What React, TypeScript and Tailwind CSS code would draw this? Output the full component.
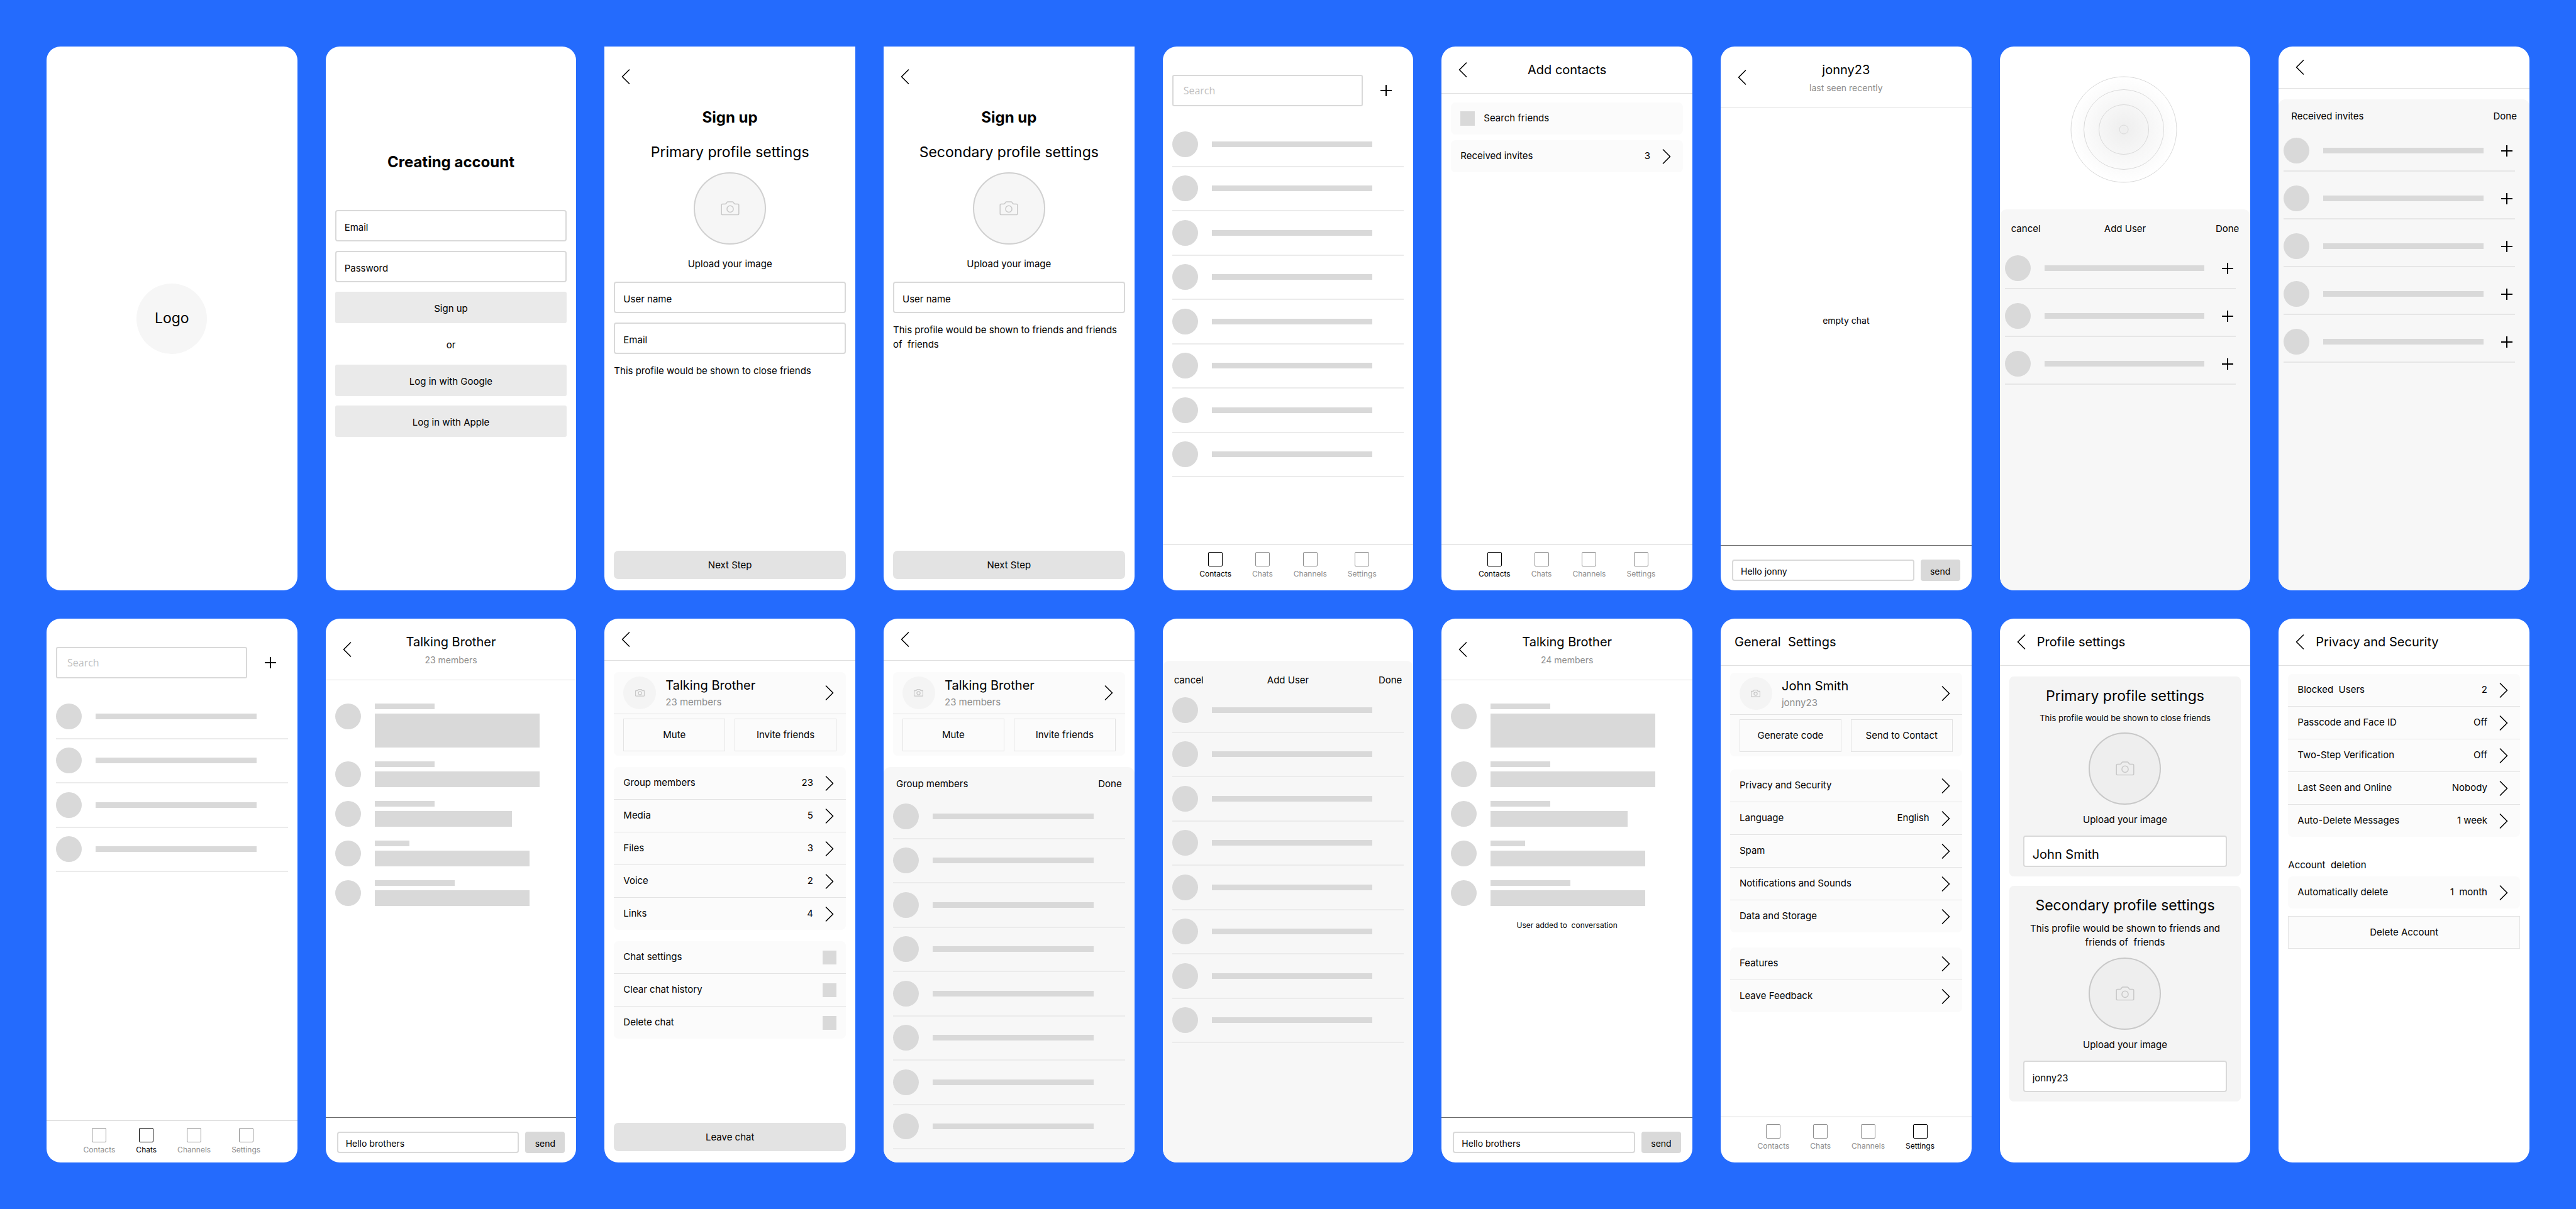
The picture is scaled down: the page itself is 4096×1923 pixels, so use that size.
import type { ReactNode } from 'react';

/* ---------- icons ---------- */

function ChevronLeft() {
  return (
    <svg className="block h-[24px] w-[14px]" viewBox="0 0 14 24" fill="none" stroke="currentColor" strokeWidth="1.6" aria-hidden="true">
      <path d="M12.5 1 1.5 12l11 11" strokeLinecap="round" strokeLinejoin="round" />
    </svg>
  );
}

function ChevronRight() {
  return (
    <svg className="block h-[24px] w-[14px] shrink-0" viewBox="0 0 14 24" fill="none" stroke="currentColor" strokeWidth="1.6" aria-hidden="true">
      <path d="m1.5 1 11 11-11 11" strokeLinecap="round" strokeLinejoin="round" />
    </svg>
  );
}

function Plus() {
  return (
    <svg className="block size-[18px]" viewBox="0 0 18 18" fill="none" stroke="currentColor" strokeWidth="2" aria-hidden="true">
      <path d="M9 0v18M0 9h18" />
    </svg>
  );
}

function Camera({ className, strokeWidth }: { className: string; strokeWidth: number }) {
  return (
    <svg className={className} viewBox="0 0 32 25" fill="none" stroke="#c8c8c8" strokeWidth={strokeWidth} aria-hidden="true">
      <path d="M3 5h4.2c.9 0 1.5-.4 2-1.2l1-1.6C10.700 1.4 11.300 1 12.200 1h7.600c.9 0 1.500.4 2 1.200l1 1.600c.5.8 1.100 1.200 2 1.200H29a2 2 0 0 1 2 2v14.500a2 2 0 0 1-2 2H3a2 2 0 0 1-2-2V7a2 2 0 0 1 2-2z" />
      <circle cx="16" cy="13.500" r="5.500" />
    </svg>
  );
}

function Radar() {
  return (
    <svg className="block size-[170px]" viewBox="0 0 170 170" fill="none" stroke="#d9d9d9" role="img" aria-label="Searching nearby">
      <defs>
        <radialGradient id="radar">
          <stop offset="0" stopColor="#eeeeee" />
          <stop offset="1" stopColor="#ffffff" />
        </radialGradient>
      </defs>
      <circle cx="85" cy="85" r="84" fill="url(#radar)" />
      <circle cx="85" cy="85" r="63.500" />
      <circle cx="85" cy="85" r="39.500" />
      <circle cx="85" cy="85" r="7" />
    </svg>
  );
}

/* ---------- building blocks ---------- */

function Phone({ children, square = false }: { children?: ReactNode; square?: boolean }) {
  return (
    <section className={`flex flex-col overflow-hidden bg-white ${square ? 'rounded-b-[22px]' : 'rounded-[22px]'}`}>
      {children}
    </section>
  );
}

function BackButton() {
  return (
    <button type="button" aria-label="Back" className="justify-self-start pl-[27px]">
      <ChevronLeft />
    </button>
  );
}

function TextField({ label, value, placeholder = label }: { label: string; value?: string; placeholder?: string }) {
  return (
    <input
      aria-label={label}
      placeholder={placeholder}
      defaultValue={value}
      className="h-[50px] w-full rounded-[4px] border-2 border-[#d9d9d9] bg-white px-[13px] pt-[5px] text-[15px] text-black outline-none placeholder:text-black"
    />
  );
}

function GreyButton({ children }: { children: ReactNode }) {
  return (
    <button type="button" className="h-[50px] w-full rounded-[3px] bg-[#eaeaea] pt-1 text-[15px]">
      {children}
    </button>
  );
}

function WideButton({ children }: { children: ReactNode }) {
  return (
    <div className="mt-auto px-[15px] pb-[18px]">
      <button type="button" className="h-[45px] w-full rounded-[7px] bg-[#e3e3e3] pt-[2px] text-[15px]">
        {children}
      </button>
    </div>
  );
}

function UploadImage({ tone = 'light' }: { tone?: 'light' | 'dark' }) {
  return (
    <button type="button" className={`flex flex-col items-center ${tone === 'light' ? 'gap-[20px]' : 'gap-[13px]'}`}>
      <span
        className={`flex size-[115px] items-center justify-center rounded-full border-2 ${
          tone === 'light' ? 'border-[#d0d0d0] bg-[#f6f6f6]' : 'border-[#c8c8c8] bg-[#eeeeee]'
        }`}
      >
        <Camera className="h-[23px] w-[30px]" strokeWidth={1.6} />
      </span>
      <span className="text-[15px] leading-[22px]">Upload your image</span>
    </button>
  );
}

function SignUp({ title, fields, note }: { title: string; fields: string[]; note: string }) {
  return (
    <Phone square>
      <div className="flex pt-[36px]">
        <BackButton />
      </div>
      <h2 className="mt-[38px] text-center text-[24px] leading-[30px] font-bold">Sign up</h2>
      <h3 className="mt-[25px] text-center text-[23px] leading-[30px]">{title}</h3>
      <div className="mt-[17px] flex justify-center">
        <UploadImage />
      </div>
      <div className="mt-[17px] flex flex-col gap-[15px] px-[15px]">
        {fields.map((f) => (
          <TextField key={f} label={f} />
        ))}
        <p className="text-[15px] leading-[23px] whitespace-pre-wrap">{note}</p>
      </div>
      <WideButton>Next Step</WideButton>
    </Phone>
  );
}

function SearchBar() {
  return (
    <div className="mt-[45px] flex items-center px-[15px]">
      <input
        type="search"
        aria-label="Search"
        placeholder="Search"
        className="h-[50px] min-w-0 flex-1 rounded-[3px] border-2 border-[#d9d9d9] px-[16px] font-['Open_Sans',sans-serif] text-[16px] outline-none placeholder:text-[#c0c0c0]"
      />
      <button type="button" aria-label="Add" className="mr-[19px] ml-[28px]">
        <Plus />
      </button>
    </div>
  );
}

function PersonList({ count, className }: { count: number; className: string }) {
  return (
    <ul className={`mx-[15px] flex flex-col ${className}`}>
      {Array.from({ length: count }, (_, i) => (
        <li key={i} className="flex flex-1 items-center gap-[22px] border-b-2 border-[#ebebeb]">
          <span className="size-[41px] shrink-0 rounded-full bg-[#d9d9d9]" />
          <span className="mr-[50px] h-[9px] flex-1 bg-[#d9d9d9]" />
        </li>
      ))}
    </ul>
  );
}

function AddableList({ count }: { count: number }) {
  return (
    <ul className="mr-[23px] ml-[8px]">
      {Array.from({ length: count }, (_, i) => (
        <li key={i} className="flex items-center border-b-2 border-[#e6e6e6] pt-[22px] pr-[4px] pb-[11px]">
          <span className="size-[41px] shrink-0 rounded-full bg-[#d9d9d9]" />
          <span className="mr-[28px] ml-[22px] h-[9px] flex-1 bg-[#d9d9d9]" />
          <button type="button" aria-label="Add user">
            <Plus />
          </button>
        </li>
      ))}
    </ul>
  );
}

function Sheet({ children, className }: { children: ReactNode; className: string }) {
  return <div className={`flex-1 rounded-t-[11px] bg-[#f7f7f7] ${className}`}>{children}</div>;
}

function AddUserBar({ className }: { className: string }) {
  return (
    <div className={`grid grid-cols-3 px-[18px] pt-5 text-[15px] leading-[22px] ${className}`}>
      <button type="button" className="self-start justify-self-start">cancel</button>
      <h2 className="text-center">Add User</h2>
      <button type="button" className="self-start justify-self-end">Done</button>
    </div>
  );
}

function SheetBar({ title, className }: { title: string; className: string }) {
  return (
    <div className={`flex items-start justify-between px-5 pt-4 text-[15px] leading-[22px] ${className}`}>
      <h2>{title}</h2>
      <button type="button">Done</button>
    </div>
  );
}

const tabs = ['Contacts', 'Chats', 'Channels', 'Settings'];

function TabBar({ active, className = 'h-[73px]' }: { active: string; className?: string }) {
  return (
    <nav className={`mt-auto flex justify-center gap-[33px] border-t border-[#d9d9d9] pt-[11px] ${className}`}>
      {tabs.map((t) => (
        <a
          key={t}
          href={`#${t.toLowerCase()}`}
          className={`flex flex-col items-center gap-[3px] text-[12px] leading-[18px] ${t === active ? 'text-black' : 'text-[#8d8d8d]'}`}
        >
          <span className="size-[23px] rounded-[2px] border border-current" />
          {t}
        </a>
      ))}
    </nav>
  );
}

function TitleBar({ title }: { title: string }) {
  return (
    <header className="grid h-[75px] grid-cols-[54px_1fr_54px] items-center border-b border-[#e0e0e0]">
      <BackButton />
      <h2 className="text-center text-[20px] leading-[28px]">{title}</h2>
    </header>
  );
}

function SideTitleBar({ title }: { title: string }) {
  return (
    <header className="flex h-[75px] items-center gap-[18px] border-b border-[#e0e0e0]">
      <BackButton />
      <h2 className="text-[20px] leading-[28px]">{title}</h2>
    </header>
  );
}

function PlainBar() {
  return (
    <header className="flex h-[67px] items-center border-b border-[#e0e0e0]">
      <BackButton />
    </header>
  );
}

function ChatHeader({ title, status }: { title: string; status: string }) {
  return (
    <header className="grid h-[98px] grid-cols-[54px_1fr_54px] items-center border-b border-[#e0e0e0]">
      <BackButton />
      <div className="self-start pt-[22px] text-center">
        <h2 className="text-[20px] leading-[30px]">{title}</h2>
        <p className="text-[14px] leading-[27px] text-[#8d8d8d]">{status}</p>
      </div>
    </header>
  );
}

function Composer({ text }: { text: string }) {
  return (
    <form className="mt-auto flex h-[72px] items-start gap-[10px] border-t border-[#6b6b6b] px-[18px] pt-[22px]">
      <input
        aria-label="Message"
        defaultValue={text}
        className="h-[34px] min-w-0 flex-1 rounded-[4px] border-2 border-[#d9d9d9] px-[12px] pt-[3px] text-[14px] outline-none"
      />
      <button type="button" className="h-[34px] w-[63px] rounded-[4px] bg-[#d9d9d9] pt-[2px] text-[14px]">
        send
      </button>
    </form>
  );
}

const messages = [
  { name: 'w-[95px]', body: 'h-[54px] w-[262px]' },
  { name: 'w-[95px]', body: 'h-[25px] w-[262px]' },
  { name: 'w-[95px]', body: 'h-[25px] w-[218px]' },
  { name: 'w-[55px]', body: 'h-[25px] w-[246px]' },
  { name: 'w-[127px]', body: 'h-[25px] w-[246px]' },
];

function GroupChat({ members, note }: { members: string; note?: string }) {
  return (
    <Phone>
      <ChatHeader title="Talking Brother" status={members} />
      <ul className="mt-[37px] flex flex-col gap-[22px] px-[15px]">
        {messages.map((m, i) => (
          <li key={i} className="flex gap-[22px]">
            <span className="size-[41px] shrink-0 rounded-full bg-[#d9d9d9]" />
            <span className="flex flex-col gap-[7px]">
              <span className={`h-[9px] bg-[#d9d9d9] ${m.name}`} />
              <span className={`bg-[#d9d9d9] ${m.body}`} />
            </span>
          </li>
        ))}
      </ul>
      {note && <p className="mt-[22px] text-center text-[12px] leading-[18px] whitespace-pre-wrap">{note}</p>}
      <Composer text="Hello brothers" />
    </Phone>
  );
}

function Card({ children, className = '' }: { children: ReactNode; className?: string }) {
  return <div className={`mx-[15px] divide-y divide-[#e3e3e3] rounded-[7px] bg-[#fbfbfb] ${className}`}>{children}</div>;
}

function Row({ label, value }: { label: string; value?: string }) {
  return (
    <button type="button" className="flex h-[52px] w-full items-center pr-[19px] pl-[15px] text-left text-[15px] last:h-[51px]">
      <span className="flex-1 whitespace-pre">{label}</span>
      <span className="mr-[19px] whitespace-pre">{value}</span>
      <ChevronRight />
    </button>
  );
}

function SquareRow({ label }: { label: string }) {
  return (
    <button type="button" className="flex h-[52px] w-full items-center justify-between px-[15px] text-left text-[15px] last:h-[51px]">
      {label}
      <span className="size-[22px] bg-[#d9d9d9]" />
    </button>
  );
}

function ProfileCard({ name, detail, actions, className }: { name: string; detail: string; actions: string[]; className: string }) {
  return (
    <Card className={className}>
      <button type="button" className="flex h-[67px] w-full items-center pr-[19px] pl-[15px] text-left">
        <span className="flex size-[52px] items-center justify-center rounded-full bg-[#f4f4f4]">
          <Camera className="h-[12px] w-[15px]" strokeWidth={2.8} />
        </span>
        <span className="ml-[15px] flex flex-1 flex-col">
          <span className="text-[20px] leading-[28px]">{name}</span>
          <span className="text-[15px] leading-[25px] text-[#8d8d8d]">{detail}</span>
        </span>
        <ChevronRight />
      </button>
      <div className="flex gap-[15px] px-[15px] py-[7px]">
        {actions.map((a) => (
          <button key={a} type="button" className="h-[52px] flex-1 border border-[#e3e3e3] text-[15px]">
            {a}
          </button>
        ))}
      </div>
    </Card>
  );
}

function ProfilePanel({ title, note, noteClass, value, valueClass }: { title: string; note: string; noteClass: string; value: string; valueClass: string }) {
  return (
    <div className="mx-[15px] flex flex-col items-center rounded-[7px] bg-[#f4f4f4] px-[22px] pt-[16px] pb-[15px]">
      <h3 className="text-[23px] leading-[30px]">{title}</h3>
      <p className={`text-center leading-[22px] whitespace-pre-wrap ${noteClass}`}>{note}</p>
      <UploadImage tone="dark" />
      <input
        aria-label={`${title} name`}
        defaultValue={value}
        className={`mt-[14px] h-[50px] w-full rounded-[4px] border-2 border-[#d9d9d9] bg-white px-[13px] outline-none ${valueClass}`}
      />
    </div>
  );
}

/* ---------- board ---------- */

export default function App() {
  return (
    <main className="grid min-h-screen auto-rows-[minmax(865px,auto)] grid-cols-[repeat(auto-fit,minmax(380px,1fr))] gap-[45px] bg-[#246bfd] p-[74px] font-['Inter',sans-serif] text-black">
      <Phone>
        <div className="flex flex-1 items-center justify-center">
          <div className="flex size-[112px] items-center justify-center rounded-full bg-[#f6f6f6] text-[23px]">Logo</div>
        </div>
      </Phone>

      <Phone>
        <h2 className="mt-[169px] text-center text-[24px] leading-[30px] font-bold">Creating account</h2>
        <div className="mt-[61px] flex flex-col gap-[15px] px-[15px]">
          <TextField label="Email" />
          <TextField label="Password" />
          <GreyButton>Sign up</GreyButton>
          <p className="h-[36px] pt-[8px] text-center text-[15px] leading-[24px]">or</p>
          <GreyButton>Log in with Google</GreyButton>
          <GreyButton>Log in with Apple</GreyButton>
        </div>
      </Phone>

      <SignUp title="Primary profile settings" fields={['User name', 'Email']} note="This profile would be shown to close friends" />
      <SignUp title="Secondary profile settings" fields={['User name']} note="This profile would be shown to friends and friends of  friends" />

      <Phone>
        <SearchBar />
        <PersonList count={8} className="mt-[26px] h-[564px]" />
        <TabBar active="Contacts" />
      </Phone>

      <Phone>
        <TitleBar title="Add contacts" />
        <Card className="mt-[14px]">
          <button type="button" className="flex h-[51px] w-full items-center gap-[14px] px-[15px] text-[15px]">
            <span className="size-[23px] bg-[#d9d9d9]" />
            Search friends
          </button>
        </Card>
        <Card className="mt-[9px]">
          <Row label="Received invites" value="3" />
        </Card>
        <TabBar active="Contacts" />
      </Phone>

      <Phone>
        <ChatHeader title="jonny23" status="last seen recently" />
        <p className="flex flex-1 items-center justify-center pb-5 text-[14px]">empty chat</p>
        <Composer text="Hello jonny" />
      </Phone>

      <Phone>
        <div className="flex justify-center pt-[47px] pr-1">
          <Radar />
        </div>
        <Sheet className="mt-[42px]">
          <AddUserBar className="h-[51px]" />
          <AddableList count={3} />
        </Sheet>
      </Phone>

      <Phone>
        <PlainBar />
        <Sheet className="mt-[17px]">
          <SheetBar title="Received invites" className="h-[39px]" />
          <AddableList count={5} />
        </Sheet>
      </Phone>

      <Phone>
        <SearchBar />
        <PersonList count={4} className="mt-[26px] h-[282px]" />
        <TabBar active="Chats" className="h-[67px]" />
      </Phone>

      <GroupChat members="23 members" />

      <Phone>
        <PlainBar />
        <ProfileCard className="mt-[18px]" name="Talking Brother" detail="23 members" actions={['Mute', 'Invite friends']} />
        <Card className="mt-[18px]">
          <Row label="Group members" value="23" />
          <Row label="Media" value="5" />
          <Row label="Files" value="3" />
          <Row label="Voice" value="2" />
          <Row label="Links" value="4" />
        </Card>
        <Card className="mt-[18px]">
          <SquareRow label="Chat settings" />
          <SquareRow label="Clear chat history" />
          <SquareRow label="Delete chat" />
        </Card>
        <WideButton>Leave chat</WideButton>
      </Phone>

      <Phone>
        <PlainBar />
        <ProfileCard className="mt-[18px]" name="Talking Brother" detail="23 members" actions={['Mute', 'Invite friends']} />
        <Sheet className="mt-[18px]">
          <SheetBar title="Group members" className="h-[44px]" />
          <PersonList count={8} className="h-[564px]" />
        </Sheet>
      </Phone>

      <Phone>
        <Sheet className="mt-[67px]">
          <AddUserBar className="h-[44px]" />
          <PersonList count={8} className="h-[564px]" />
        </Sheet>
      </Phone>

      <GroupChat members="24 members" note="User added to  conversation" />

      <Phone>
        <header className="flex h-[75px] items-center border-b border-[#e0e0e0] px-[22px]">
          <h2 className="text-[20px] leading-[28px] whitespace-pre">{'General  Settings'}</h2>
        </header>
        <ProfileCard className="mt-[11px]" name="John Smith" detail="jonny23" actions={['Generate code', 'Send to Contact']} />
        <Card className="mt-[21px]">
          <Row label="Privacy and Security" />
          <Row label="Language" value="English" />
          <Row label="Spam" />
          <Row label="Notifications and Sounds" />
          <Row label="Data and Storage" />
        </Card>
        <Card className="mt-[24px]">
          <Row label="Features" />
          <Row label="Leave Feedback" />
        </Card>
        <TabBar active="Settings" />
      </Phone>

      <Phone>
        <SideTitleBar title="Profile settings" />
        <div className="mt-[17px] flex flex-col gap-[15px]">
          <ProfilePanel
            title="Primary profile settings"
            note="This profile would be shown to close friends"
            noteClass="pt-[9px] pb-[12px] text-[13px]"
            value="John Smith"
            valueClass="pt-[10px] text-[20px]"
          />
          <ProfilePanel
            title="Secondary profile settings"
            note="This profile would be shown to friends and friends of  friends"
            noteClass="pt-[11px] pb-[13px] text-[15px]"
            value="jonny23"
            valueClass="pt-[5px] text-[15px]"
          />
        </div>
      </Phone>

      <Phone>
        <SideTitleBar title="Privacy and Security" />
        <Card className="mt-[13px]">
          <Row label="Blocked  Users" value="2" />
          <Row label="Passcode and Face ID" value="Off" />
          <Row label="Two-Step Verification" value="Off" />
          <Row label="Last Seen and Online" value="Nobody" />
          <Row label="Auto-Delete Messages" value="1 week" />
        </Card>
        <h3 className="mx-[15px] mt-[34px] text-[15px] leading-[22px] whitespace-pre">{'Account  deletion'}</h3>
        <Card className="mt-[7px]">
          <Row label="Automatically delete" value="1  month" />
        </Card>
        <button type="button" className="mx-[15px] mt-[12px] h-[52px] border border-[#e3e3e3] bg-[#fbfbfb] text-[15px]">
          Delete Account
        </button>
      </Phone>
    </main>
  );
}
